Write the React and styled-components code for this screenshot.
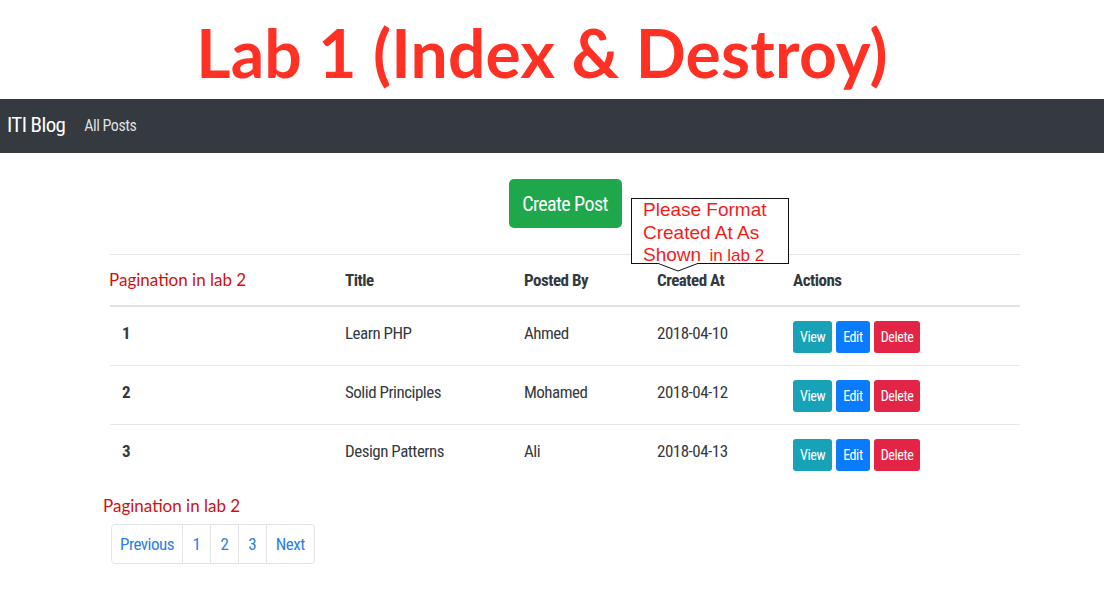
import React from "react";
import styled, { createGlobalStyle } from "styled-components";

const GlobalStyle = createGlobalStyle`
    body {
        margin: 0;
        background: #ffffff;
        font-family: Roboto, "Liberation Sans", sans-serif;
    }
`;

const Page = styled.div`
    width: 1104px;
    height: 593px;
    overflow: hidden;
    position: relative;
`;

const Title = styled.h1`
    margin: 0;
    height: 99px;
    box-sizing: border-box;
    padding: 6px 20px 0 0;
    display: flex;
    align-items: center;
    justify-content: center;
    font-family: Lato, "Open Sans", sans-serif;
    font-weight: 700;
    font-size: 66px;
    letter-spacing: 0.2px;
    color: #ff3124;
`;

const Navbar = styled.nav`
    height: 54px;
    background: #343a40;
    display: flex;
    align-items: center;
    padding: 0 7px;
    gap: 19px;
`;

const Brand = styled.span`
    color: #ffffff;
    font-size: 21px;
    font-stretch: 80%;
    letter-spacing: -0.6px;
    margin-top: -2px;
`;

const NavLink = styled.span`
    color: rgba(255, 255, 255, 0.85);
    font-size: 16px;
    font-stretch: 80%;
    letter-spacing: -0.5px;
    margin-top: -2px;
`;

const Container = styled.main`
    margin-left: 110px;
    width: 910px;
    padding-top: 26px;
    position: relative;
`;

const Center = styled.div`
    display: flex;
    justify-content: center;
    margin-bottom: 26px;
`;

const CreateButton = styled.button`
    height: 49px;
    width: 113px;
    border: none;
    border-radius: 5px;
    background: #1ea84b;
    color: #ffffff;
    font-family: inherit;
    font-size: 20px;
    font-stretch: 80%;
    letter-spacing: -0.6px;
`;

const Table = styled.table`
    width: 100%;
    table-layout: fixed;
    border-collapse: collapse;
    color: #343a40;
    font-size: 17px;
    font-stretch: 80%;
    letter-spacing: -0.5px;
`;

const Th = styled.th`
    text-align: left;
    font-weight: 700;
    height: 50px;
    padding: 0 12px;
    border-top: 1px solid #e3e6e9;
    border-bottom: 2px solid #e0e3e6;
    vertical-align: middle;
`;

const Td = styled.td`
    height: 59px;
    box-sizing: border-box;
    padding: 14px 12px 0;
    line-height: 24px;
    font-weight: ${(p) => (p.$bold ? 700 : 400)};
    border-bottom: ${(p) => (p.$last ? "none" : "1px solid #e6e8eb")};
    vertical-align: top;
`;

const Actions = styled.div`
    display: flex;
    gap: 4px;
`;

const ActionButton = styled.button`
    height: 32px;
    padding: 0 7px;
    border: none;
    border-radius: 3px;
    background: ${(p) => p.$bg};
    color: #ffffff;
    font-family: inherit;
    font-size: 14px;
    font-stretch: 80%;
    letter-spacing: -0.4px;
`;

const Note = styled.div`
    font-family: Lato, "Open Sans", sans-serif;
    font-size: 17px;
    color: #d10f0f;
`;

const HeaderNote = styled(Note)`
    position: absolute;
    left: -1px;
    top: 116px;
`;

const Callout = styled.div`
    position: absolute;
    left: 521px;
    top: 45px;
    width: 158px;
    height: 66px;
    padding: 0 0 0 11px;
    box-sizing: border-box;
    border: 1px solid #111;
    background: #ffffff;
    font-family: "Liberation Sans", Arial, sans-serif;
    font-size: 19px;
    line-height: 22.5px;
    color: #f21c1c;
    white-space: nowrap;
`;

const Small = styled.span`
    font-size: 17px;
    margin-left: 3px;
`;

const Pointer = styled.svg`
    position: absolute;
    left: 25px;
    top: 64px;
`;

const FooterNote = styled(Note)`
    margin: 12px 0 0 -7px;
`;

const Pagination = styled.ul`
    list-style: none;
    display: inline-flex;
    margin: 8px 0 0 1px;
    padding: 0;
    border: 1px solid #e2e5e8;
    border-radius: 4px;
`;

const PageItem = styled.li`
    height: 38px;
    display: flex;
    align-items: center;
    padding: 0 ${(p) => p.$pad}px;
    border-left: ${(p) => (p.$first ? "none" : "1px solid #e2e5e8")};
    color: #2a7ee6;
    font-size: 17px;
    font-stretch: 80%;
    letter-spacing: -0.5px;
`;

const posts = [
    { id: 1, title: "Learn PHP", by: "Ahmed", at: "2018-04-10" },
    { id: 2, title: "Solid Principles", by: "Mohamed", at: "2018-04-12" },
    { id: 3, title: "Design Patterns", by: "Ali", at: "2018-04-13" },
];

const App = () => {
    return (
        <Page>
            <GlobalStyle />
            <Title>Lab 1 (Index &amp; Destroy)</Title>
            <Navbar>
                <Brand>ITI Blog</Brand>
                <NavLink>All Posts</NavLink>
            </Navbar>
            <Container>
                <Center>
                    <CreateButton>Create Post</CreateButton>
                </Center>
                <Table>
                    <colgroup>
                        <col style={{ width: 223 }} />
                        <col style={{ width: 179 }} />
                        <col style={{ width: 133 }} />
                        <col style={{ width: 136 }} />
                        <col />
                    </colgroup>
                    <thead>
                        <tr>
                            <Th></Th>
                            <Th>Title</Th>
                            <Th>Posted By</Th>
                            <Th>Created At</Th>
                            <Th>Actions</Th>
                        </tr>
                    </thead>
                    <tbody>
                        {posts.map((p, i) => (
                            <tr key={p.id}>
                                <Td $bold $last={i === posts.length - 1}>{p.id}</Td>
                                <Td $last={i === posts.length - 1}>{p.title}</Td>
                                <Td $last={i === posts.length - 1}>{p.by}</Td>
                                <Td $last={i === posts.length - 1}>{p.at}</Td>
                                <Td $last={i === posts.length - 1}>
                                    <Actions>
                                        <ActionButton $bg="#17a2b8">View</ActionButton>
                                        <ActionButton $bg="#0a7bff">Edit</ActionButton>
                                        <ActionButton $bg="#e32446">Delete</ActionButton>
                                    </Actions>
                                </Td>
                            </tr>
                        ))}
                    </tbody>
                </Table>
                <HeaderNote>Pagination in lab 2</HeaderNote>
                <Callout>
                    Please Format
                    <br />
                    Created At As
                    <br />
                    Shown <Small>in lab 2</Small>
                    <Pointer width="42" height="9" viewBox="0 0 42 9">
                        <polyline points="0,0 21,8 42,0" fill="#fff" stroke="#111" strokeWidth="1" />
                    </Pointer>
                </Callout>
                <FooterNote>Pagination in lab 2</FooterNote>
                <Pagination>
                    <PageItem $first $pad={8}>Previous</PageItem>
                    <PageItem $pad={9.5}>1</PageItem>
                    <PageItem $pad={9.5}>2</PageItem>
                    <PageItem $pad={9.5}>3</PageItem>
                    <PageItem $pad={9}>Next</PageItem>
                </Pagination>
            </Container>
        </Page>
    );
};

export default App;
